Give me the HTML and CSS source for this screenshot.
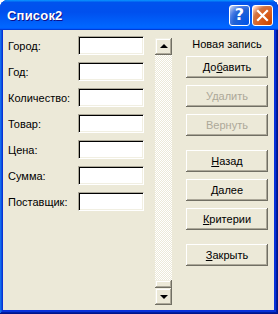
FILE: index.html
```html
<!DOCTYPE html>
<html lang="ru">
<head>
  <meta charset="UTF-8">
  <title>Список2</title>
  <link rel="stylesheet" href="styles.css">
</head>
<body>

  <div class="window">
    <div class="titlebar">
      <span class="title">Список2</span>
      <div class="controls">
        <button class="ctl help" type="button">?</button>
        <button class="ctl close" type="button">
          <svg width="13" height="13" viewBox="0 0 13 13"><path d="M2 2 L11 11 M11 2 L2 11" stroke="#fff" stroke-width="2.2" stroke-linecap="square"/></svg>
        </button>
      </div>
    </div>

    <div class="client">
      <div class="fields">
        <label>Город:</label><input type="text">
        <label>Год:</label><input type="text">
        <label>Количество:</label><input type="text">
        <label>Товар:</label><input type="text">
        <label>Цена:</label><input type="text">
        <label>Сумма:</label><input type="text">
        <label>Поставщик:</label><input type="text">
      </div>

      <div class="scrollbar">
        <div class="sb-btn"><span class="arrow up"></span></div>
        <div class="sb-track"></div>
        <div class="sb-thumb"></div>
        <div class="sb-btn"><span class="arrow down"></span></div>
      </div>

      <div class="actions">
        <div class="status">Новая запись</div>
        <button class="btn" type="button">До<u>б</u>авить</button>
        <button class="btn" type="button" disabled>Удалить</button>
        <button class="btn" type="button" disabled>Вернуть</button>
        <button class="btn group" type="button"><u>Н</u>азад</button>
        <button class="btn" type="button"><u>Д</u>алее</button>
        <button class="btn" type="button"><u>К</u>ритерии</button>
        <button class="btn group" type="button"><u>З</u>акрыть</button>
      </div>
    </div>
  </div>

</body>
</html>
```

FILE: styles.css
```css
body {
  margin: 0;
  font-family: "Liberation Sans", Tahoma, sans-serif;
  font-size: 11px;
  background: #ffffff;
}

.window {
  width: 278px;
  height: 314px;
  background: #0831d9;
  border-radius: 8px 8px 0 0;
  display: flex;
  flex-direction: column;
  box-shadow: inset -1px -1px #00138c, inset 1px 1px #166aee, inset -2px -2px #001ea0, inset 2px 2px #0855dd;
}

.titlebar {
  height: 30px;
  flex: none;
  display: flex;
  align-items: center;
  justify-content: space-between;
  padding: 0 5px 0 7px;
  border-radius: 8px 8px 0 0;
  background: linear-gradient(180deg, #0997ff, #0053ee 8%, #0050ee 40%, #0066ff 88%, #0066ff 93%, #005bff 95%, #003dd7 96%, #003dd7);
}

.title {
  font-family: "Liberation Sans", Arial, sans-serif;
  font-weight: bold;
  font-size: 13px;
  color: #fff;
  text-shadow: 1px 1px #0f1089;
  letter-spacing: 0.2px;
}

.controls {
  display: flex;
  gap: 2px;
}

.ctl {
  width: 21px;
  height: 21px;
  padding: 0;
  border: 1px solid #fff;
  border-radius: 3px;
  display: flex;
  align-items: center;
  justify-content: center;
  color: #fff;
}

.help {
  background: radial-gradient(circle at 90% 90%, #0054e9 0%, #2263d5 55%, #4479e4 70%, #a3bbec 90%, #fff 100%);
  font-family: "DejaVu Sans", sans-serif;
  font-weight: bold;
  font-size: 16px;
  line-height: 1;
}

.close {
  background: radial-gradient(circle at 90% 90%, #cc4600 0%, #dc6527 55%, #cd7546 70%, #ffccb2 90%, #fff 100%);
}

.client {
  flex: 1;
  margin: 0 4px 4px 3px;
  background: #ece9d8;
  display: flex;
}

.fields {
  display: grid;
  grid-template-columns: 70px 66px;
  grid-auto-rows: 19px;
  row-gap: 7px;
  align-items: center;
  padding: 6px 0 0 5px;
  align-content: start;
}

label {
  color: #000;
  padding-top: 1px;
}

input {
  box-sizing: border-box;
  width: 66px;
  height: 19px;
  margin: 0;
  background: #fff;
  border-style: solid;
  border-width: 1px;
  border-color: #aca899 #fff #fff #aca899;
  box-shadow: inset 1px 1px #000, inset -1px -1px #f1efe2;
}

.scrollbar {
  width: 17px;
  margin: 8px 0 5px 11px;
  display: flex;
  flex-direction: column;
}

.sb-btn, .sb-thumb {
  box-sizing: border-box;
  background: #ece9d8;
  box-shadow: inset -1px -1px #716f64, inset 1px 1px #f1efe2, inset -2px -2px #aca899, inset 2px 2px #fff;
}

.sb-btn {
  height: 17px;
  display: flex;
  align-items: center;
  justify-content: center;
}

.sb-thumb {
  height: 8px;
}

.sb-track {
  flex: 1;
  background: repeating-conic-gradient(#ece9d8 0 25%, #fff 0 50%) 0 0 / 2px 2px;
}

.arrow {
  width: 0;
  height: 0;
  border-left: 4px solid transparent;
  border-right: 4px solid transparent;
}

.arrow.up {
  border-bottom: 4px solid #000;
  margin-top: -1px;
}

.arrow.down {
  border-top: 4px solid #000;
}

.actions {
  width: 82px;
  margin-left: 14px;
  display: flex;
  flex-direction: column;
  gap: 7px;
}

.status {
  text-align: center;
  margin-top: 9px;
  height: 10px;
  line-height: 10px;
}

.btn {
  height: 22px;
  padding: 0;
  border: none;
  font-family: inherit;
  font-size: inherit;
  color: #000;
  background: #ece9d8;
  box-shadow: inset -1px -1px #716f64, inset 1px 1px #fff, inset -2px -2px #aca899;
}

.btn:disabled {
  color: #aca899;
}

.btn.group {
  margin-top: 7px;
}
```
